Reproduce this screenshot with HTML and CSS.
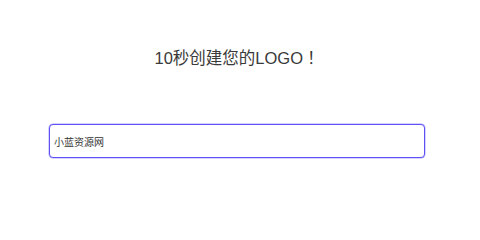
FILE: index.html
```html
<!DOCTYPE html>
<html lang="zh">
<head>
<meta charset="utf-8">
<link rel="stylesheet" href="styles.css">
</head>
<body>
<div class="page">
  <h1 class="title">10秒创建您的LOGO<span class="bang">！</span></h1>
  <div class="field">
    <input class="input" type="text" value="小蓝资源网">
  </div>
</div>
</body>
</html>
```
FILE: styles.css
```css
html, body {
  margin: 0;
  padding: 0;
  background: #fff;
}
.page {
  width: 474px;
  height: 239px;
  display: flex;
  flex-direction: column;
  font-family: "Liberation Sans", Arial, "Noto Sans CJK SC", sans-serif;
  color: #333;
}
.title {
  margin: 46px 0 0 0;
  height: 24px;
  font-size: 16.5px;
  font-weight: normal;
  line-height: 24px;
  text-align: center;
  color: #3a3a3a;
}
.bang {
  display: inline-block;
  width: 1em;
  line-height: 1;
  text-align: center;
  font-family: "Noto Sans CJK TC", sans-serif;
}
.field {
  margin-top: 54px;
  padding: 0 49px;
}
.input {
  box-sizing: border-box;
  width: 100%;
  height: 34px;
  margin: 0;
  border: 1px solid #5f52f5;
  border-radius: 4px;
  padding: 0 0 0 4px;
  font-family: "Liberation Sans", Arial, "Noto Sans CJK SC", sans-serif;
  font-size: 10px;
  color: #333;
  outline: none;
  background: #fff;
  box-shadow: 0 0 0 0.5px rgba(95, 82, 245, 0.5);
}
```
